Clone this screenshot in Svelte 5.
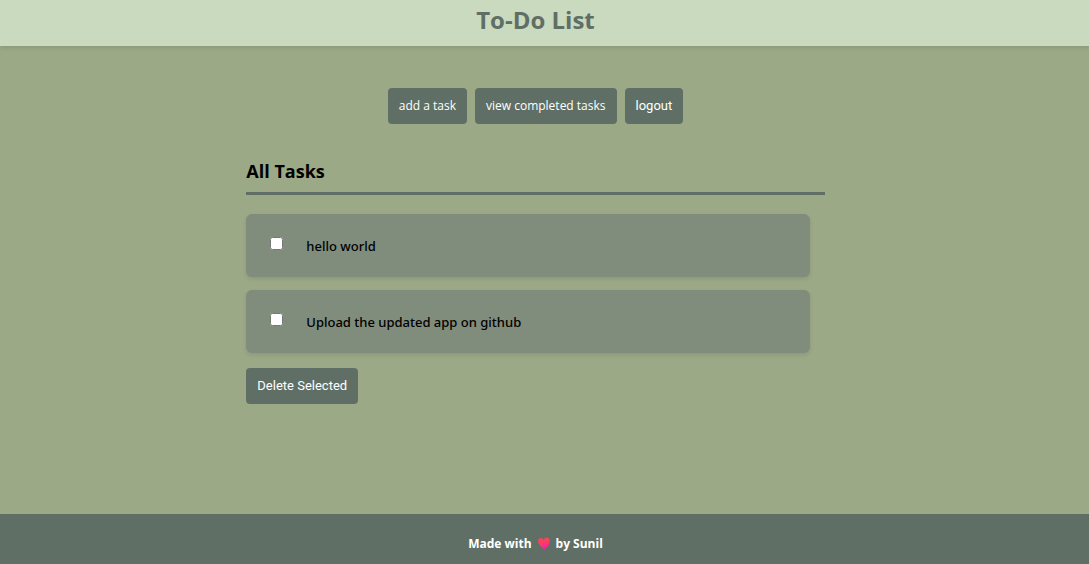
<script>
  let tasks = $state([
    { id: 1, title: 'hello world', selected: false },
    { id: 2, title: 'Upload the updated app on github', selected: false }
  ]);

  function deleteSelected(event) {
    event.preventDefault();
    tasks = tasks.filter((task) => !task.selected);
  }
</script>

<div class="page">
  <header>
    <h1>To-Do List</h1>
  </header>

  <main>
    <nav>
      <a class="button" href="#add">add a task</a>
      <a class="button" href="#completed">view completed tasks</a>
      <button class="button" type="button">logout</button>
    </nav>

    <form onsubmit={deleteSelected}>
      <h2>All Tasks</h2>
      <ul>
        {#each tasks as task (task.id)}
          <li>
            <input type="checkbox" id="task-{task.id}" bind:checked={task.selected} />
            <label for="task-{task.id}">{task.title}</label>
          </li>
        {/each}
      </ul>
      <button class="button" type="submit">Delete Selected</button>
    </form>
  </main>

  <footer>
    <span>Made with</span>
    <svg viewBox="0 0 14 14" width="14" height="14" aria-hidden="true">
      <defs>
        <linearGradient id="heart" x1="0" y1="0" x2="0.3" y2="1">
          <stop offset="0" stop-color="#f9475c" />
          <stop offset="0.5" stop-color="#f8405f" />
          <stop offset="1" stop-color="#fb1fa0" />
        </linearGradient>
      </defs>
      <path
        fill="url(#heart)"
        d="M6.600 4C5.800 2.100 3.800 1.600 2.400 2.500C.9 3.500 .8 5.400 1.500 7.200C2.500 9.700 4.800 11.600 7.200 13.400C9.600 11.800 11.900 9.600 12.600 6.800C13.200 4.300 12.300 1.700 10.300 1.400C8.400 1.200 7 2.500 6.600 4Z"
      />
    </svg>
    <span>by Sunil</span>
  </footer>
</div>

<style>
  :global(body) {
    margin: 0;
    background: #9ca986;
  }

  .page {
    display: flex;
    flex-direction: column;
    min-height: 100vh;
    font-family: 'Segoe UI', 'Open Sans', 'Noto Sans', sans-serif;
    color: #000;
  }

  header,
  main,
  footer {
    box-sizing: border-box;
    padding-right: 18px;
  }

  header {
    height: 46px;
    background: #c9dabf;
    box-shadow: 0 2px 4px rgba(0, 0, 0, 0.1);
    text-align: center;
  }

  h1 {
    margin: 0;
    font-size: 24px;
    font-weight: 700;
    line-height: 40px;
    color: #5f6f65;
  }

  main {
    flex: 1;
    display: flex;
    flex-direction: column;
    align-items: center;
    padding-top: 42px;
    padding-bottom: 24px;
  }

  nav {
    display: flex;
    gap: 8px;
  }

  .button {
    box-sizing: border-box;
    height: 36px;
    padding: 0 11px;
    border: 0;
    border-radius: 4px;
    background: #5f6f65;
    color: #fff;
    font-family: Roboto, 'Liberation Sans', Arial, sans-serif;
    font-size: 13px;
    line-height: 36px;
    text-decoration: none;
    white-space: nowrap;
    cursor: pointer;
  }

  a.button {
    font-family: 'Segoe UI', 'Open Sans', 'Noto Sans', sans-serif;
    font-size: 12px;
  }

  form {
    width: 54%;
    margin-top: 32px;
  }

  h2 {
    margin: 0 0 19px;
    padding-bottom: 6px;
    border-bottom: 3px solid #5f6f65;
    font-size: 18px;
    font-weight: 700;
    line-height: 30px;
  }

  ul {
    display: flex;
    flex-direction: column;
    gap: 13px;
    margin: 0 15px 15px 0;
    padding: 0;
    list-style: none;
  }

  li {
    display: flex;
    align-items: center;
    gap: 23px;
    box-sizing: border-box;
    height: 63px;
    padding: 0 24px;
    border-radius: 6px;
    background: #808d7c;
    box-shadow: 0 2px 4px rgba(0, 0, 0, 0.1);
  }

  input {
    width: 13px;
    height: 13px;
    margin: 0 0 4px;
  }

  label {
    font-family: 'Segoe UI', 'Noto Sans', sans-serif;
    font-size: 13px;
    font-weight: 500;
    line-height: 20px;
  }

  footer {
    display: flex;
    justify-content: center;
    align-items: center;
    gap: 5px;
    height: 50px;
    padding-top: 8px;
    background: #5f6f65;
    color: #fff;
    font-size: 12px;
    font-weight: 700;
  }
</style>
